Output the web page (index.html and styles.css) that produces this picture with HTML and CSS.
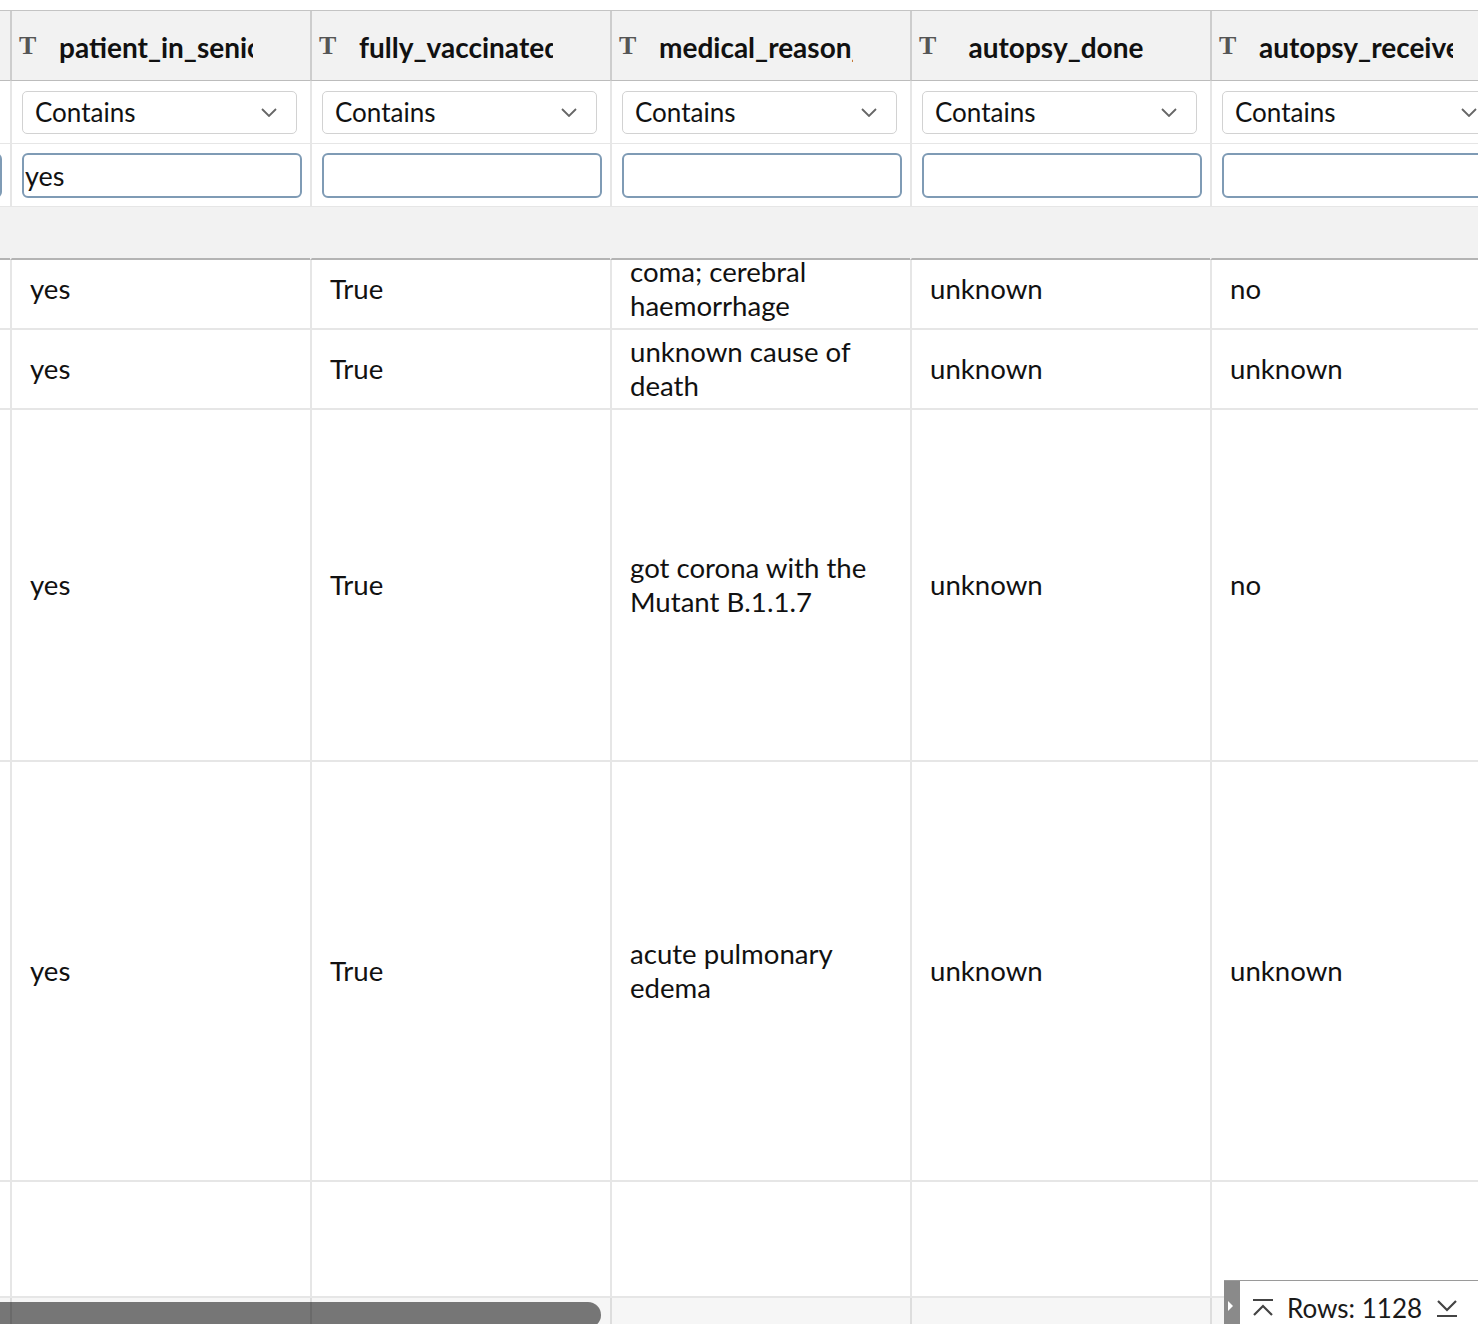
FILE: index.html
```html
<!DOCTYPE html>
<html lang="en">
<head>
<meta charset="utf-8">
<title>Data grid</title>
<link rel="stylesheet" href="styles.css">
</head>
<body>
<div class="viewport">
  <div class="grid">
    <!-- header row -->
    <div class="cell head"><span class="ticon">T</span><span class="label">country_name</span></div>
    <div class="cell head"><span class="ticon">T</span><span class="label">patient_in_senior_home</span></div>
    <div class="cell head"><span class="ticon">T</span><span class="label">fully_vaccinated</span></div>
    <div class="cell head"><span class="ticon">T</span><span class="label">medical_reason_of_death</span></div>
    <div class="cell head"><span class="ticon">T</span><span class="label fit">autopsy_done</span></div>
    <div class="cell head"><span class="ticon">T</span><span class="label">autopsy_received</span></div>

    <!-- filter operator row -->
    <div class="cell filt1"><div class="select"><span>Contains</span><svg class="chev" viewBox="0 0 16 9" width="16" height="9"><polyline points="1,1 8,8 15,1" fill="none" stroke="#666" stroke-width="1.8"/></svg></div></div>
    <div class="cell filt1"><div class="select"><span>Contains</span><svg class="chev" viewBox="0 0 16 9" width="16" height="9"><polyline points="1,1 8,8 15,1" fill="none" stroke="#666" stroke-width="1.8"/></svg></div></div>
    <div class="cell filt1"><div class="select"><span>Contains</span><svg class="chev" viewBox="0 0 16 9" width="16" height="9"><polyline points="1,1 8,8 15,1" fill="none" stroke="#666" stroke-width="1.8"/></svg></div></div>
    <div class="cell filt1"><div class="select"><span>Contains</span><svg class="chev" viewBox="0 0 16 9" width="16" height="9"><polyline points="1,1 8,8 15,1" fill="none" stroke="#666" stroke-width="1.8"/></svg></div></div>
    <div class="cell filt1"><div class="select"><span>Contains</span><svg class="chev" viewBox="0 0 16 9" width="16" height="9"><polyline points="1,1 8,8 15,1" fill="none" stroke="#666" stroke-width="1.8"/></svg></div></div>
    <div class="cell filt1"><div class="select"><span>Contains</span><svg class="chev" viewBox="0 0 16 9" width="16" height="9"><polyline points="1,1 8,8 15,1" fill="none" stroke="#666" stroke-width="1.8"/></svg></div></div>

    <!-- filter value row -->
    <div class="cell filt2"><div class="input"></div></div>
    <div class="cell filt2"><div class="input">yes</div></div>
    <div class="cell filt2"><div class="input"></div></div>
    <div class="cell filt2"><div class="input"></div></div>
    <div class="cell filt2"><div class="input"></div></div>
    <div class="cell filt2"><div class="input"></div></div>

    <!-- band -->
    <div class="cell band"></div>
    <div class="cell band"></div>
    <div class="cell band"></div>
    <div class="cell band"></div>
    <div class="cell band"></div>
    <div class="cell band"></div>

    <!-- row 1 -->
    <div class="cell data r1"></div>
    <div class="cell data r1">yes</div>
    <div class="cell data r1">True</div>
    <div class="cell data r1">coma; cerebral haemorrhage</div>
    <div class="cell data r1">unknown</div>
    <div class="cell data r1">no</div>

    <!-- row 2 -->
    <div class="cell data"></div>
    <div class="cell data">yes</div>
    <div class="cell data">True</div>
    <div class="cell data">unknown cause of death</div>
    <div class="cell data">unknown</div>
    <div class="cell data">unknown</div>

    <!-- row 3 -->
    <div class="cell data"></div>
    <div class="cell data">yes</div>
    <div class="cell data">True</div>
    <div class="cell data">got corona with the Mutant B.1.1.7</div>
    <div class="cell data">unknown</div>
    <div class="cell data">no</div>

    <!-- row 4 -->
    <div class="cell data"></div>
    <div class="cell data">yes</div>
    <div class="cell data">True</div>
    <div class="cell data">acute pulmonary edema</div>
    <div class="cell data">unknown</div>
    <div class="cell data">unknown</div>

    <!-- row 5 -->
    <div class="cell data"></div>
    <div class="cell data"></div>
    <div class="cell data"></div>
    <div class="cell data"></div>
    <div class="cell data"></div>
    <div class="cell data"></div>

    <!-- row 6 -->
    <div class="cell data last"></div>
    <div class="cell data last"></div>
    <div class="cell data last"></div>
    <div class="cell data last"></div>
    <div class="cell data last"></div>
    <div class="cell data last"></div>
  </div>

  <div class="hscroll"><div class="thumb"></div></div>

  <div class="rowpanel">
    <div class="handle"><span class="tri"></span></div>
    <svg class="nav up" viewBox="0 0 22 20" width="22" height="20"><line x1="1" y1="2" x2="21" y2="2" stroke="#444" stroke-width="2"/><polyline points="2,17 11,8 20,17" fill="none" stroke="#444" stroke-width="2.2"/></svg>
    <span class="rows">Rows: 1128</span>
    <svg class="nav" viewBox="0 0 22 20" width="22" height="20"><polyline points="2,3 11,12 20,3" fill="none" stroke="#444" stroke-width="2.2"/><line x1="1" y1="18" x2="21" y2="18" stroke="#444" stroke-width="2"/></svg>
  </div>
</div>
</body>
</html>
```

FILE: styles.css
```css
html, body {
  margin: 0;
  padding: 0;
  background: #ffffff;
}

body {
  font-family: Lato, "Open Sans", sans-serif;
  color: #111111;
}

.viewport {
  position: relative;
  width: 1478px;
  height: 1324px;
  overflow: hidden;
  padding-top: 10px;
  box-sizing: border-box;
}

.grid {
  display: grid;
  grid-template-columns: repeat(6, 300px);
  grid-template-rows: 70px 63px 63px 53px 70px 80px 352px 420px 116px 120px;
  margin-left: -290px;
  width: 1800px;
  border-top: 1px solid #c4c4c4;
}

.cell {
  box-sizing: border-box;
  border-left: 2px solid #e6e6e6;
  display: flex;
  align-items: center;
  min-width: 0;
}

.head {
  background: #f2f2f2;
  border-left-color: #cdcdcd;
  border-bottom: 1px solid #bcbcbc;
  padding-left: 7px;
  padding-top: 3px;
}

.ticon {
  font-family: "Liberation Serif", "DejaVu Serif", serif;
  font-weight: bold;
  font-size: 26px;
  color: #555555;
  width: 40px;
  flex: none;
  line-height: 1;
  margin-top: -2px;
}

.label {
  font-weight: bold;
  font-size: 28px;
  white-space: nowrap;
  overflow: hidden;
  width: 194px;
  flex: none;
  color: #111111;
}

.label.fit {
  text-align: center;
}

.filt1 {
  border-bottom: 1px solid #e6e6e6;
  padding-left: 10px;
}

.select {
  box-sizing: border-box;
  width: 275px;
  height: 43px;
  border: 1.5px solid #d2d2d2;
  border-radius: 5px;
  display: flex;
  align-items: center;
  justify-content: space-between;
  padding: 0 19px 0 12px;
  font-size: 26px;
  background: #ffffff;
}

.chev {
  display: block;
  margin-top: 1px;
}

.filt2 {
  border-bottom: 1px solid #e6e6e6;
  padding-left: 10px;
}

.input {
  box-sizing: border-box;
  width: 280px;
  height: 45px;
  border: 2px solid #7f9bb5;
  border-radius: 6px;
  font-size: 27px;
  line-height: 41px;
  padding-left: 1px;
  background: #ffffff;
}

.band {
  background: #f2f2f2;
  border-left-color: #f2f2f2;
  border-bottom: 2px solid #b4b4b4;
}

.data {
  border-bottom: 2px solid #e6e6e6;
  padding: 0 18px;
  font-size: 27.6px;
  line-height: 34px;
}

.data.r1 {
  padding-bottom: 10px;
}

.data.last {
  border-bottom: none;
}

.hscroll {
  position: absolute;
  left: 0;
  right: 0;
  bottom: 0;
  height: 26px;
  background: rgba(0, 0, 0, 0.035);
}

.thumb {
  position: absolute;
  left: 0;
  top: 4px;
  width: 601px;
  height: 26px;
  border-radius: 0 13px 13px 0;
  background: rgba(0, 0, 0, 0.52);
}

.rowpanel {
  position: absolute;
  left: 1224px;
  right: 0;
  top: 1280px;
  bottom: -11px;
  background: #ffffff;
  border-top: 1px solid #9a9a9a;
  display: flex;
  align-items: center;
}

.handle {
  align-self: stretch;
  width: 16px;
  background: #8a8a8a;
  display: flex;
  align-items: flex-start;
  justify-content: center;
  padding-top: 20px;
  box-sizing: border-box;
}

.tri {
  width: 0;
  height: 0;
  border-top: 5px solid transparent;
  border-bottom: 5px solid transparent;
  border-left: 5px solid #ffffff;
  margin-left: -3px;
}

.nav {
  display: block;
  flex: none;
}

.nav.up {
  margin-left: 12px;
}

.rows {
  font-size: 26px;
  color: #1a1a1a;
  margin: 0 14px 0 13px;
  white-space: nowrap;
}
```
